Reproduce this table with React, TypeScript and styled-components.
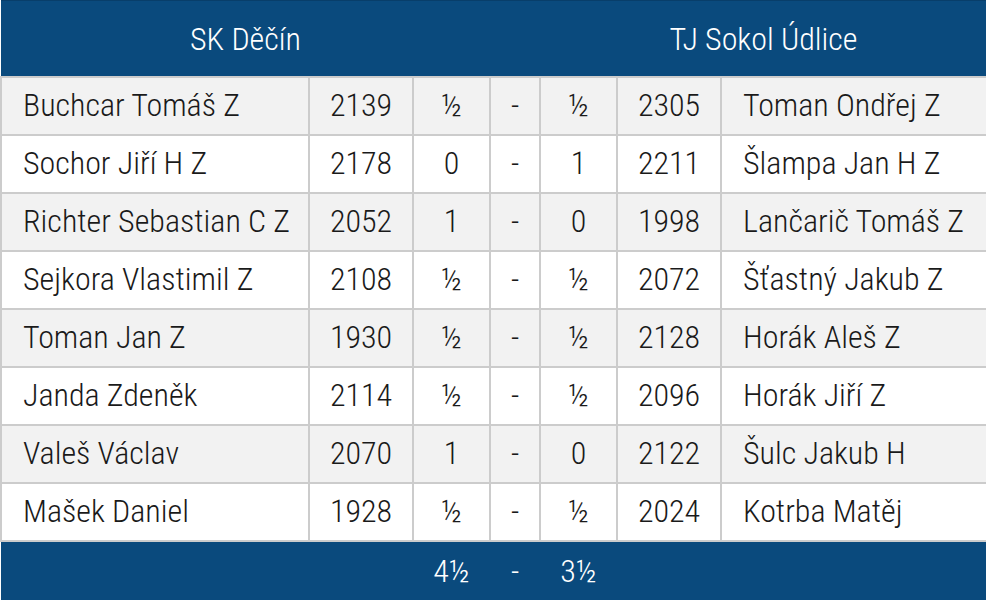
import React from "react";
import styled, { createGlobalStyle } from "styled-components";

const Global = createGlobalStyle`
  html, body { margin: 0; padding: 0; background: #ffffff; }
  body { font-family: Roboto, "Noto Sans", sans-serif; }
`;

const Table = styled.table`
  width: 986px;
  border-collapse: collapse;
  table-layout: fixed;
  font-family: Roboto, sans-serif;
  font-weight: 300;
  font-stretch: 87.5%;
  font-size: 32px;
  color: #1a1a1a;
`;

const HeadRow = styled.tr`
  height: 76px;
  background: #0a4a7d;
`;

const HeadCell = styled.th`
  padding: 1px 0 0;
  font-weight: 300;
  color: #ffffff;
  text-align: center;
  border-top: 1px solid #083e6a;
`;

const Row = styled.tr<{ $alt: boolean }>`
  height: 58px;
  background: ${(p) => (p.$alt ? "#f2f2f2" : "#ffffff")};
`;

const Cell = styled.td<{ $align?: "left" | "center" }>`
  padding: 0 0 2px;
  padding-left: ${(p) => (p.$align === "left" ? "21px" : "0")};
  text-align: ${(p) => p.$align ?? "center"};
  border: 2px solid #cccccc;
  white-space: nowrap;
  overflow: hidden;
`;

const FootRow = styled.tr`
  height: 59px;
  background: #0a4a7d;
`;

const FootCell = styled.td`
  padding: 0;
  color: #ffffff;
  text-align: center;
`;

type Game = [string, string, string, string, string, string];

const games: Game[] = [
  ["Buchcar Tomáš Z", "2139", "½", "½", "2305", "Toman Ondřej Z"],
  ["Sochor Jiří H Z", "2178", "0", "1", "2211", "Šlampa Jan H Z"],
  ["Richter Sebastian C Z", "2052", "1", "0", "1998", "Lančarič Tomáš Z"],
  ["Sejkora Vlastimil Z", "2108", "½", "½", "2072", "Šťastný Jakub Z"],
  ["Toman Jan Z", "1930", "½", "½", "2128", "Horák Aleš Z"],
  ["Janda Zdeněk", "2114", "½", "½", "2096", "Horák Jiří Z"],
  ["Valeš Václav", "2070", "1", "0", "2122", "Šulc Jakub H"],
  ["Mašek Daniel", "1928", "½", "½", "2024", "Kotrba Matěj"],
];

export default function App() {
  return (
    <>
      <Global />
      <Table>
        <colgroup>
          <col style={{ width: 308 }} />
          <col style={{ width: 104 }} />
          <col style={{ width: 77 }} />
          <col style={{ width: 50 }} />
          <col style={{ width: 77 }} />
          <col style={{ width: 104 }} />
          <col style={{ width: 266 }} />
        </colgroup>
        <thead>
          <HeadRow>
            <HeadCell colSpan={3}>SK Děčín</HeadCell>
            <HeadCell />
            <HeadCell colSpan={3}>TJ Sokol Údlice</HeadCell>
          </HeadRow>
        </thead>
        <tbody>
          {games.map((g, i) => (
            <Row key={i} $alt={i % 2 === 0}>
              <Cell $align="left">{g[0]}</Cell>
              <Cell>{g[1]}</Cell>
              <Cell>{g[2]}</Cell>
              <Cell>-</Cell>
              <Cell>{g[3]}</Cell>
              <Cell>{g[4]}</Cell>
              <Cell $align="left">{g[5]}</Cell>
            </Row>
          ))}
        </tbody>
        <tfoot>
          <FootRow>
            <FootCell colSpan={2} />
            <FootCell>4½</FootCell>
            <FootCell>-</FootCell>
            <FootCell>3½</FootCell>
            <FootCell colSpan={2} />
          </FootRow>
        </tfoot>
      </Table>
    </>
  );
}
